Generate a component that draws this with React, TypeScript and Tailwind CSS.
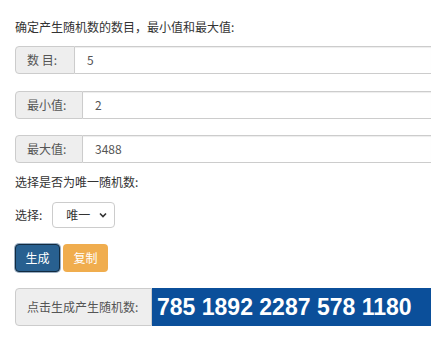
const font = "font-['Microsoft_YaHei','Noto_Sans_CJK_SC',sans-serif]";

function Field({ label, value, labelW }: { label: string; value: string; labelW: string }) {
  return (
    <div className="flex h-[28px] w-[416px] text-[12px]">
      <span
        className={`flex ${labelW} shrink-0 items-center rounded-l-[4px] border border-[#ccc] bg-[#eee] pl-[11px] text-[#555]`}
      >
        {label}
      </span>
      <div className="flex flex-1 items-center border-y border-[#ccc] pl-[12px] text-[#555] shadow-[inset_0_1px_1px_rgba(0,0,0,0.075)]">
        {value}
      </div>
    </div>
  );
}

export default function App() {
  return (
    <div className={`${font} min-h-[339px] w-[444px] bg-white pl-[15px] pt-[18px] text-[#333]`}>
      <p className="text-[12px] leading-[18px]">确定产生随机数的数目，最小值和最大值:</p>
      <div className="mt-[10px] flex flex-col gap-[17px]">
        <Field label="数 目:" value="5" labelW="w-[60px]" />
        <Field label="最小值:" value="2" labelW="w-[68px]" />
      </div>
      <div className="mt-[16px]">
        <Field label="最大值:" value="3488" labelW="w-[68px]" />
      </div>
      <p className="mt-[10px] text-[12px] leading-[18px]">选择是否为唯一随机数:</p>
      <div className="mt-[11px] flex items-center gap-[10px] text-[12px]">
        <span>选择:</span>
        <div className="flex h-[26px] w-[63px] items-center justify-between rounded-[4px] border border-[#ccc] pl-[13px] pr-[6px]">
          <span>唯一</span>
          <svg width="10" height="10" viewBox="0 0 10 10">
            <path d="M2 3.5 L5 6.5 L8 3.5" fill="none" stroke="#333" strokeWidth="1.6" />
          </svg>
        </div>
      </div>
      <div className="mt-[16px] flex gap-[3px] text-[12px] text-white">
        <button className="h-[28px] w-[45px] rounded-[4px] border border-[#122b40] bg-[#286090] shadow-[0_0_0_1px_#9aaec2]">
          生成
        </button>
        <button className="h-[28px] w-[45px] rounded-[4px] bg-[#f0ad4e]">复制</button>
      </div>
      <div className="mt-[16px] flex h-[38px] w-[416px]">
        <span className="flex w-[137px] shrink-0 items-center rounded-l-[4px] border border-[#ccc] bg-[#eee] pl-[11px] text-[12px] text-[#555]">
          点击生成产生随机数:
        </span>
        <div className="flex flex-1 items-center bg-[#0b4f9a] pl-[5px] font-['Liberation_Sans',Arial,sans-serif] text-[23px] font-bold text-white">
          785 1892 2287 578 1180
        </div>
      </div>
    </div>
  );
}
